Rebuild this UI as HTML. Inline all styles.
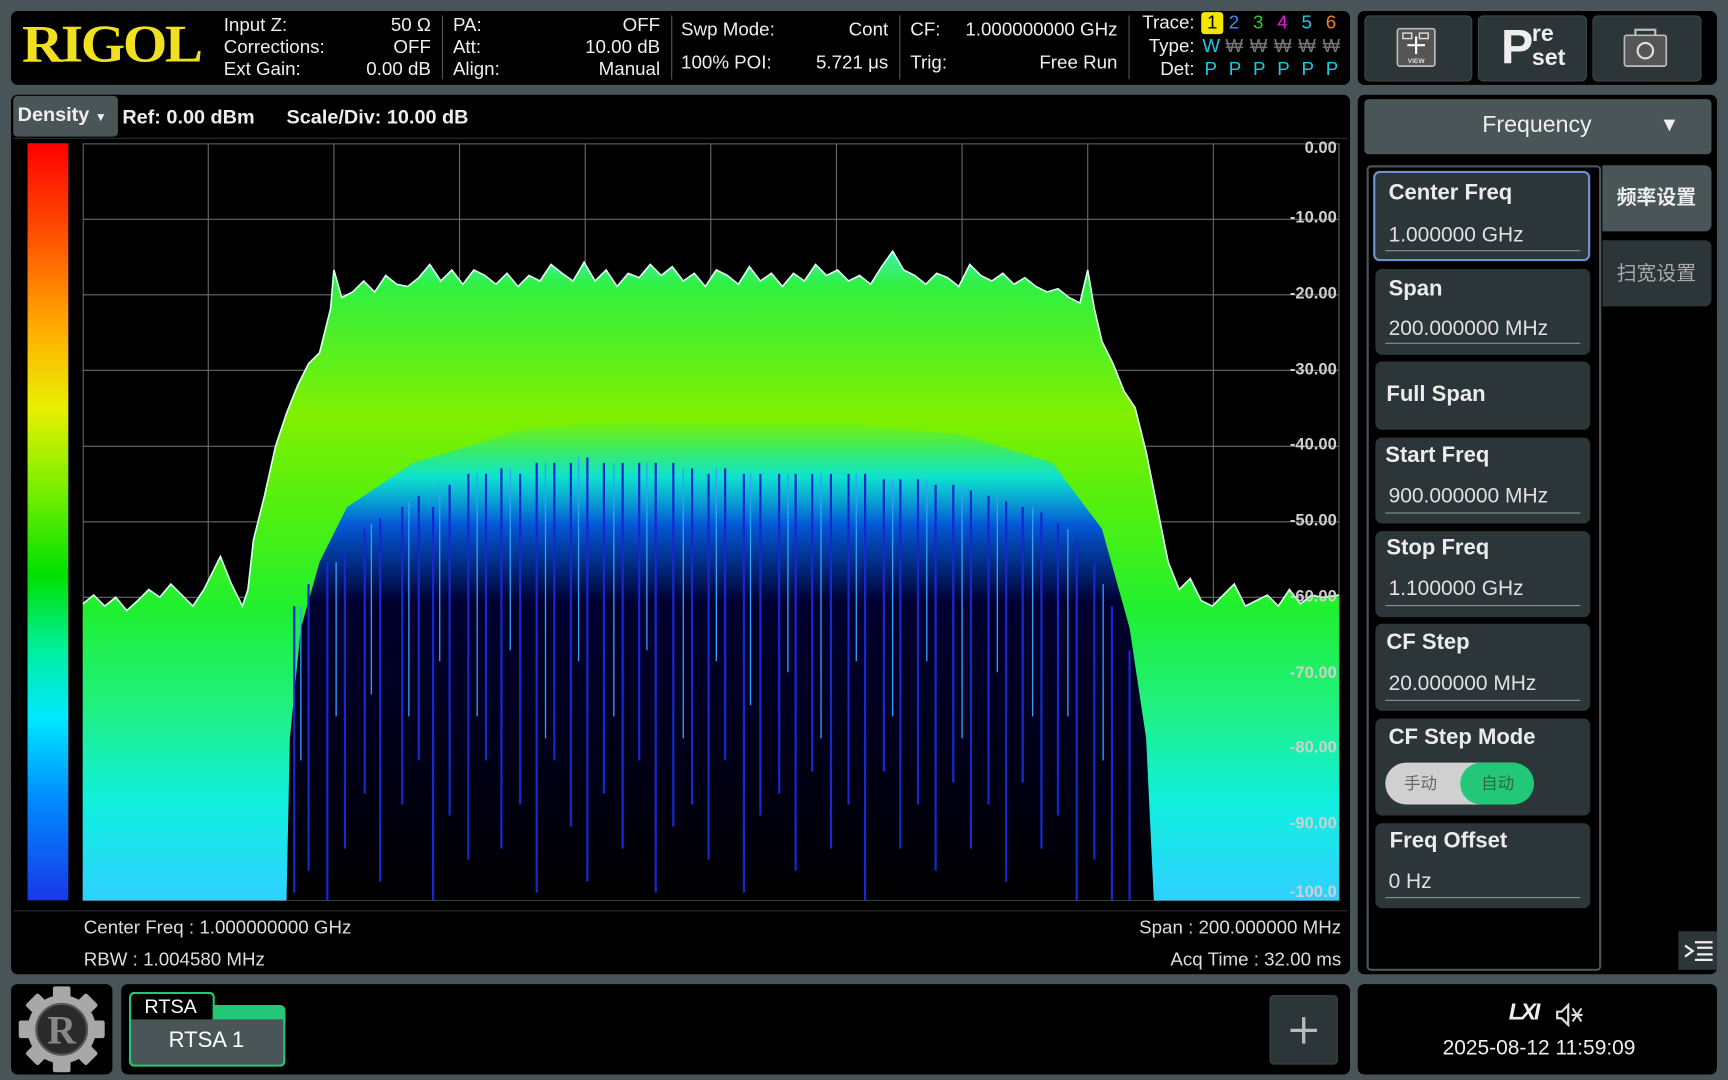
<!DOCTYPE html>
<html><head><meta charset="utf-8">
<style>
html,body{margin:0;padding:0;width:1728px;height:1080px;overflow:hidden;background:#485457;}
#w{position:absolute;left:0;top:0;width:1568px;height:980px;transform:scale(1.10204);transform-origin:0 0;font-family:"Liberation Sans","Noto Sans CJK SC",sans-serif;color:#e8e8e8;}
.a{position:absolute;white-space:nowrap;}
.box{position:absolute;background:#000;border-radius:6px;}
.h{font-size:17px;line-height:20px;color:#eee;}
.r{text-align:right;}
.sep{position:absolute;width:1px;background:#555;top:14px;height:58px;}
.btn{position:absolute;background:#2c3538;border-radius:5px;border:1px solid #3d474a;}
.item{position:absolute;left:1248px;width:195px;background:#2c3538;border-radius:6px;}
.it{position:absolute;left:12px;font-size:20px;font-weight:bold;color:#ececec;}
.iv{position:absolute;left:12px;font-size:19px;color:#e0e0e0;}
.ul{position:absolute;left:9px;width:177px;height:1px;background:#8a9296;}
.yl{position:absolute;right:0;font-size:15px;font-weight:bold;color:#cfcfcf;text-align:right;width:70px;}
</style></head><body><div id="w">

<div class="box" style="left:10px;top:10px;width:1215px;height:67px;"></div>
<div class="a" style="left:20px;top:14px;font-family:'Liberation Serif',serif;font-weight:bold;font-size:48px;color:#f0e020;letter-spacing:-2px;line-height:54px;transform:scaleX(1.08);transform-origin:0 0;">RIGOL</div>

<div class="a h" style="left:203px;top:13px;">Input Z:</div>
<div class="a h" style="left:203px;top:33px;">Corrections:</div>
<div class="a h" style="left:203px;top:53px;">Ext Gain:</div>
<div class="a h r" style="right:1177px;top:13px;">50 Ω</div>
<div class="a h r" style="right:1177px;top:33px;">OFF</div>
<div class="a h r" style="right:1177px;top:53px;">0.00 dB</div>
<div class="sep" style="left:401px"></div>
<div class="a h" style="left:411px;top:13px;">PA:</div>
<div class="a h" style="left:411px;top:33px;">Att:</div>
<div class="a h" style="left:411px;top:53px;">Align:</div>
<div class="a h r" style="right:969px;top:13px;">OFF</div>
<div class="a h r" style="right:969px;top:33px;">10.00 dB</div>
<div class="a h r" style="right:969px;top:53px;">Manual</div>
<div class="sep" style="left:609px"></div>
<div class="a h" style="left:618px;top:17px;">Swp Mode:</div>
<div class="a h" style="left:618px;top:47px;">100% POI:</div>
<div class="a h r" style="right:762px;top:17px;">Cont</div>
<div class="a h r" style="right:762px;top:47px;">5.721 μs</div>
<div class="sep" style="left:816px"></div>
<div class="a h" style="left:826px;top:17px;">CF:</div>
<div class="a h" style="left:826px;top:47px;">Trig:</div>
<div class="a h r" style="right:554px;top:17px;">1.000000000 GHz</div>
<div class="a h r" style="right:554px;top:47px;">Free Run</div>
<div class="sep" style="left:1024px"></div>
<div class="a h r" style="right:484px;top:11px;">Trace:</div>
<div class="a h r" style="right:484px;top:32px;">Type:</div>
<div class="a h r" style="right:484px;top:53px;">Det:</div>
<div class="a h" style="left:1090px;top:11px;width:20px;height:20px;background:#f5e600;border-radius:3px;color:#000;text-align:center;">1</div>
<div class="a h" style="left:1115px;top:11px;color:#3a8ef0;">2</div>
<div class="a h" style="left:1137px;top:11px;color:#20d020;">3</div>
<div class="a h" style="left:1159px;top:11px;color:#e020e0;">4</div>
<div class="a h" style="left:1181px;top:11px;color:#20c8e8;">5</div>
<div class="a h" style="left:1203px;top:11px;color:#f08020;">6</div>
<div class="a h" style="left:1091px;top:32px;color:#20c8e0;">W</div>
<div class="a h" style="left:1112px;top:32px;color:#777;">₩</div>
<div class="a h" style="left:1134px;top:32px;color:#777;">₩</div>
<div class="a h" style="left:1156px;top:32px;color:#777;">₩</div>
<div class="a h" style="left:1178px;top:32px;color:#777;">₩</div>
<div class="a h" style="left:1200px;top:32px;color:#777;">₩</div>
<div class="a h" style="left:1093px;top:53px;color:#20c8e0;">P</div>
<div class="a h" style="left:1115px;top:53px;color:#20c8e0;">P</div>
<div class="a h" style="left:1137px;top:53px;color:#20c8e0;">P</div>
<div class="a h" style="left:1159px;top:53px;color:#20c8e0;">P</div>
<div class="a h" style="left:1181px;top:53px;color:#20c8e0;">P</div>
<div class="a h" style="left:1203px;top:53px;color:#20c8e0;">P</div>

<div class="box" style="left:1232px;top:10px;width:326px;height:67px;"></div>
<div class="btn" style="left:1238px;top:14px;width:96px;height:58px;"></div>
<div class="btn" style="left:1341px;top:14px;width:97px;height:58px;"></div>
<div class="btn" style="left:1445px;top:14px;width:97px;height:58px;"></div>
<svg class="a" style="left:1266px;top:24px" width="40" height="40" viewBox="0 0 40 40">
<rect x="2" y="2" width="34" height="34" rx="2" fill="#555" stroke="#bbb" stroke-width="1.5"/>
<rect x="7" y="6" width="8" height="5" fill="none" stroke="#ddd" stroke-width="1.3"/>
<rect x="22" y="6" width="8" height="5" fill="none" stroke="#ddd" stroke-width="1.3"/>
<path d="M19 9V25M11 17H27" stroke="#fff" stroke-width="2"/>
<text x="19" y="33" font-size="6" fill="#ddd" text-anchor="middle" font-family="Liberation Sans" font-weight="bold">VIEW</text>
</svg>
<div class="a" style="left:1362px;top:18px;font-size:44px;font-weight:bold;color:#eee;line-height:50px;">P</div>
<div class="a" style="left:1390px;top:20px;font-size:21px;font-weight:bold;color:#eee;line-height:22px;">re<br>set</div>
<svg class="a" style="left:1472px;top:24px" width="42" height="38" viewBox="0 0 42 38">
<path d="M12 8V3H30V8" fill="none" stroke="#bbb" stroke-width="2"/>
<rect x="2" y="8" width="38" height="28" rx="2" fill="#555" stroke="#bbb" stroke-width="1.5"/>
<circle cx="21" cy="22" r="7" fill="none" stroke="#ddd" stroke-width="2"/>
</svg>

<div class="box" style="left:10px;top:86px;width:1215px;height:798px;"></div>
<div class="a" style="left:12px;top:87px;width:95px;height:37px;background:#4a5558;border-radius:4px;"></div>
<div class="a" style="left:16px;top:94px;font-size:18px;font-weight:bold;color:#eee;">Density <span style="font-size:11px">▼</span></div>
<div class="a" style="left:111px;top:96px;font-size:18px;font-weight:bold;color:#eee;">Ref: 0.00 dBm</div>
<div class="a" style="left:260px;top:96px;font-size:18px;font-weight:bold;color:#eee;">Scale/Div: 10.00 dB</div>
<div class="a" style="left:12px;top:125px;width:1211px;height:1px;background:#2a2f31;"></div>
<div class="a" style="left:25px;top:130px;width:37px;height:687px;background:linear-gradient(#ff0000 0%,#ff5000 12%,#ffb000 25%,#e8f000 35%,#80f000 45%,#00e000 57%,#00f0a0 67%,#00e8ff 76%,#0090ff 86%,#1838e8 100%);"></div>

<svg class="a" style="left:75px;top:130px" width="1141" height="688" viewBox="0 0 1141 688">
<defs>
<linearGradient id="g" gradientUnits="userSpaceOnUse" x1="0" y1="100" x2="0" y2="687">
<stop offset="0" stop-color="#40f0a0"/>
<stop offset="0.05" stop-color="#30f040"/>
<stop offset="0.25" stop-color="#80f000"/>
<stop offset="0.4" stop-color="#50f010"/>
<stop offset="0.55" stop-color="#20f030"/>
<stop offset="0.7" stop-color="#20f080"/>
<stop offset="0.85" stop-color="#10f0e0"/>
<stop offset="1" stop-color="#30d0ff"/>
</linearGradient>
<linearGradient id="bk" x1="0" y1="0" x2="0" y2="1">
<stop offset="0" stop-color="#00f0c0" stop-opacity="0"/>
<stop offset="0.12" stop-color="#00e0f0" stop-opacity="0.85"/>
<stop offset="0.22" stop-color="#0050e0" stop-opacity="0.95"/>
<stop offset="0.38" stop-color="#000030" stop-opacity="1"/>
<stop offset="1" stop-color="#000"/>
</linearGradient>
</defs>
<g stroke="#6a6a6a" stroke-width="1">
<path d="M0 0.5H1140M0 69H1140M0 137.5H1140M0 206H1140M0 275H1140M0 343.5H1140M0 412H1140M0 481H1140M0 549.5H1140M0 618H1140M0 687H1140"/>
<path d="M0.5 0V687M114 0V687M228 0V687M342 0V687M456 0V687M570 0V687M684 0V687M798 0V687M912 0V687M1026 0V687M1140 0V687"/>
</g>
<path d="M0 418L10 410L20 420L30 412L40 424L50 415L60 405L70 412L80 400L90 410L100 420L110 405L115 395L125 375L135 400L145 420L150 405L155 360L165 320L175 275L185 245L195 220L205 200L215 190L225 150L228 115L235 140L245 135L255 125L265 135L275 120L285 128L295 130L305 122L315 110L325 125L335 115L345 128L355 115L365 120L375 128L385 118L395 130L405 120L415 125L425 110L435 118L445 125L455 108L465 125L475 115L485 130L495 118L505 122L515 110L525 120L535 112L545 125L555 118L565 130L575 115L585 120L595 128L605 112L615 125L625 118L635 130L645 118L655 125L665 110L675 120L685 115L695 125L705 120L715 128L725 112L735 98L745 115L755 120L765 128L775 118L785 122L795 130L805 110L815 120L825 125L835 118L845 128L855 122L865 130L875 135L885 132L895 140L905 145L912 115L918 150L925 180L935 200L945 225L955 240L965 280L975 330L985 380L995 405L1005 395L1015 415L1025 420L1035 410L1045 400L1055 420L1065 415L1075 410L1085 420L1095 405L1105 418L1115 410L1125 412L1140 410L1140 687L0 687Z" fill="url(#g)"/>
<path d="M185 687L188 540L198 440L215 380L240 330L300 290L400 260L500 250L600 255L700 255L800 265L880 290L925 350L950 440L965 540L972 687Z" fill="url(#bk)"/>
<g stroke-width="2">
<path stroke="#1828d0" d="M192 420V680M205 400V660M222 380V687M238 370V640M256 350V590M270 340V670M290 330V600M305 320V560M318 330V687M333 310V610M350 300V650M366 300V560M380 295V640M397 300V600M412 290V680M428 290V560M443 290V620M458 285V670M473 290V590M490 290V640M505 290V560M520 290V680M536 290V620M553 295V600M568 300V650M583 295V560M600 300V680M615 300V610M632 300V590M647 300V660M662 300V570M679 300V640M695 300V600M710 300V687M727 305V570M742 305V640M758 305V600M774 310V660M790 310V580M806 315V640M822 320V600M838 325V670M853 330V580M870 335V640M885 345V610M902 360V687M918 380V650M934 420V687M950 460V687"/>
<path stroke="#30a0ff" stroke-width="1.2" d="M198 420V560M230 380V520M262 345V500M296 325V520M324 310V470M358 300V520M388 295V460M420 290V540M450 285V470M482 290V520M512 290V460M545 295V540M575 295V470M606 300V510M640 300V480M670 300V540M702 300V470M735 305V520M766 305V470M798 310V540M830 320V480M862 330V520M894 350V520M926 400V560"/>
</g>
<path d="M0 418L10 410L20 420L30 412L40 424L50 415L60 405L70 412L80 400L90 410L100 420L110 405L115 395L125 375L135 400L145 420L150 405L155 360L165 320L175 275L185 245L195 220L205 200L215 190L225 150L228 115L235 140L245 135L255 125L265 135L275 120L285 128L295 130L305 122L315 110L325 125L335 115L345 128L355 115L365 120L375 128L385 118L395 130L405 120L415 125L425 110L435 118L445 125L455 108L465 125L475 115L485 130L495 118L505 122L515 110L525 120L535 112L545 125L555 118L565 130L575 115L585 120L595 128L605 112L615 125L625 118L635 130L645 118L655 125L665 110L675 120L685 115L695 125L705 120L715 128L725 112L735 98L745 115L755 120L765 128L775 118L785 122L795 130L805 110L815 120L825 125L835 118L845 128L855 122L865 130L875 135L885 132L895 140L905 145L912 115L918 150L925 180L935 200L945 225L955 240L965 280L975 330L985 380L995 405L1005 395L1015 415L1025 420L1035 410L1045 400L1055 420L1065 415L1075 410L1085 420L1095 405L1105 418L1115 410L1125 412L1140 410" fill="none" stroke="#d8fff0" stroke-width="1.5"/>
</svg>
<div class="yl" style="left:1143px;top:126px;">0.00</div>
<div class="yl" style="left:1143px;top:189px;">-10.00</div>
<div class="yl" style="left:1143px;top:258px;">-20.00</div>
<div class="yl" style="left:1143px;top:327px;">-30.00</div>
<div class="yl" style="left:1143px;top:395px;">-40.00</div>
<div class="yl" style="left:1143px;top:464px;">-50.00</div>
<div class="yl" style="left:1143px;top:533px;">-60.00</div>
<div class="yl" style="left:1143px;top:602px;">-70.00</div>
<div class="yl" style="left:1143px;top:670px;">-80.00</div>
<div class="yl" style="left:1143px;top:739px;">-90.00</div>
<div class="yl" style="left:1143px;top:801px;">-100.0</div>
<div class="a" style="left:12px;top:826px;width:1211px;height:1px;background:#2a2f31;"></div>
<div class="a" style="left:76px;top:832px;font-size:17px;color:#ddd;">Center Freq : 1.000000000 GHz</div>
<div class="a" style="left:76px;top:861px;font-size:17px;color:#ddd;">RBW : 1.004580 MHz</div>
<div class="a r" style="right:351px;top:832px;font-size:17px;color:#ddd;">Span : 200.000000 MHz</div>
<div class="a r" style="right:351px;top:861px;font-size:17px;color:#ddd;">Acq Time : 32.00 ms</div>

<div class="box" style="left:1232px;top:86px;width:326px;height:798px;"></div>
<div class="a" style="left:1238px;top:90px;width:315px;height:50px;background:#4a5558;border-radius:4px;"></div>
<div class="a" style="left:1345px;top:102px;font-size:21px;color:#eee;">Frequency</div>
<div class="a" style="left:1506px;top:103px;font-size:18px;color:#eee;">▼</div>
<div class="a" style="left:1240px;top:150px;width:209px;height:727px;border:2px solid #4a5558;border-radius:4px;background:#000;"></div>
<div class="a" style="left:1454px;top:150px;width:99px;height:60px;background:#4a5558;border-radius:0 6px 6px 0;"></div>
<div class="a" style="left:1467px;top:165px;font-size:18px;font-weight:bold;color:#eee;font-family:'Noto Sans CJK SC',sans-serif;">频率设置</div>
<div class="a" style="left:1454px;top:218px;width:99px;height:60px;background:#2c3538;border-radius:0 6px 6px 0;"></div>
<div class="a" style="left:1467px;top:234px;font-size:18px;color:#aaa;font-family:'Noto Sans CJK SC',sans-serif;">扫宽设置</div>

<div class="item" style="left:1246px;top:155px;height:82px;width:197px;border:2px solid #6f8fd0;box-sizing:border-box;background:#2c3538;">
<div class="it" style="top:7px;">Center Freq</div><div class="iv" style="top:46px;">1.000000 GHz</div><div class="ul" style="top:70px;"></div></div>
<div class="item" style="top:244px;height:78px;"><div class="it" style="top:7px;">Span</div><div class="iv" style="top:44px;">200.000000 MHz</div><div class="ul" style="top:67px;"></div></div>
<div class="item" style="top:328px;height:62px;"><div class="it" style="left:10px;top:19px;">Full Span</div></div>
<div class="item" style="top:397px;height:78px;"><div class="it" style="left:9px;top:5px;">Start Freq</div><div class="iv" style="top:43px;">900.000000 MHz</div><div class="ul" style="top:68px;"></div></div>
<div class="item" style="top:482px;height:78px;"><div class="it" style="left:10px;top:4px;">Stop Freq</div><div class="iv" style="top:42px;">1.100000 GHz</div><div class="ul" style="top:67px;"></div></div>
<div class="item" style="top:566px;height:79px;"><div class="it" style="left:10px;top:6px;">CF Step</div><div class="iv" style="top:44px;">20.000000 MHz</div><div class="ul" style="top:69px;"></div></div>
<div class="item" style="top:652px;height:88px;"><div class="it" style="top:6px;">CF Step Mode</div>
<div class="a" style="left:9px;top:40px;width:134px;height:38px;background:#d0d0d0;border-radius:19px;"></div>
<div class="a" style="left:77px;top:40px;width:67px;height:38px;background:#22c878;border-radius:19px;"></div>
<div class="a" style="left:26px;top:48px;font-size:15px;color:#666;font-family:'Noto Sans CJK SC',sans-serif;">手动</div>
<div class="a" style="left:96px;top:48px;font-size:15px;color:#2a6a40;font-family:'Noto Sans CJK SC',sans-serif;">自动</div></div>
<div class="item" style="top:747px;height:77px;"><div class="it" style="left:13px;top:5px;">Freq Offset</div><div class="iv" style="top:43px;">0 Hz</div><div class="ul" style="top:67px;"></div></div>

<div class="a" style="left:1523px;top:845px;width:35px;height:35px;background:#2c3538;"></div>
<svg class="a" style="left:1526px;top:850px" width="30" height="26" viewBox="0 0 30 26"><path d="M3 8L10 13L3 18M12 5H28M14 10H28M14 16H28M12 21H28" fill="none" stroke="#eee" stroke-width="2"/></svg>

<div class="box" style="left:10px;top:893px;width:92px;height:82px;"></div>
<svg class="a" style="left:16px;top:894px" width="80" height="80" viewBox="0 0 80 80">
<g transform="translate(40 40)">
<g fill="#a8a8a8">
<circle r="31"/>
<rect x="-8" y="-39" width="16" height="14" rx="2"/>
<rect x="-8" y="-39" width="16" height="14" rx="2" transform="rotate(45)"/>
<rect x="-8" y="-39" width="16" height="14" rx="2" transform="rotate(90)"/>
<rect x="-8" y="-39" width="16" height="14" rx="2" transform="rotate(135)"/>
<rect x="-8" y="-39" width="16" height="14" rx="2" transform="rotate(180)"/>
<rect x="-8" y="-39" width="16" height="14" rx="2" transform="rotate(225)"/>
<rect x="-8" y="-39" width="16" height="14" rx="2" transform="rotate(270)"/>
<rect x="-8" y="-39" width="16" height="14" rx="2" transform="rotate(315)"/>
</g>
<circle r="23" fill="#2a2a2a" stroke="#555" stroke-width="2"/>
<text x="0" y="13" font-size="36" font-weight="bold" fill="#888" text-anchor="middle" font-family="Liberation Serif">R</text>
</g></svg>
<div class="box" style="left:110px;top:893px;width:1115px;height:82px;"></div>
<div class="a" style="left:117px;top:900px;width:78px;height:27px;border:2px solid #22c878;border-bottom:none;border-radius:5px 5px 0 0;background:#000;box-sizing:border-box;"></div>
<div class="a" style="left:193px;top:912px;width:66px;height:15px;background:#22c878;border-radius:0 5px 0 0;"></div>
<div class="a" style="left:117px;top:925px;width:142px;height:43px;border:2px solid #22c878;border-top:none;border-radius:0 0 5px 5px;background:#4a5558;box-sizing:border-box;"></div>
<div class="a" style="left:131px;top:903px;font-size:18px;color:#fff;">RTSA</div>
<div class="a" style="left:153px;top:933px;font-size:20px;color:#fff;">RTSA 1</div>
<div class="a" style="left:1152px;top:903px;width:62px;height:63px;background:#2c3538;border-radius:4px;border:1px solid #3d474a;box-sizing:border-box;"></div>
<svg class="a" style="left:1168px;top:920px" width="30" height="30" viewBox="0 0 30 30"><path d="M15 3V27M3 15H27" stroke="#bbb" stroke-width="3"/></svg>

<div class="box" style="left:1232px;top:893px;width:326px;height:82px;"></div>
<div class="a" style="left:1369px;top:907px;font-size:21px;font-weight:bold;font-style:italic;color:#eee;letter-spacing:-2px;">LXI</div>
<svg class="a" style="left:1409px;top:908px" width="28" height="26" viewBox="0 0 28 26"><path d="M4 10H8L14 4V22L8 16H4Z" fill="none" stroke="#ddd" stroke-width="2"/><path d="M18 7L26 19M18 19L26 7M17 13H27" stroke="#ddd" stroke-width="1.8"/></svg>
<div class="a" style="left:1309px;top:941px;font-size:19px;color:#eee;">2025-08-12 11:59:09</div>

</div></body></html>
